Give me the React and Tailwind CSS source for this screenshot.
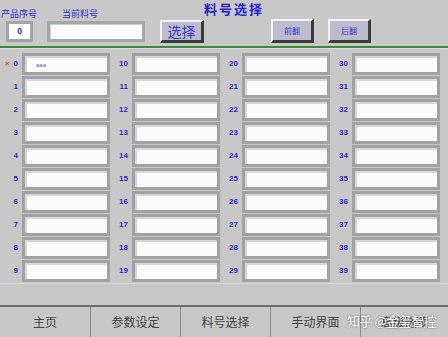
const CJK = "font-['Noto_Sans_CJK_SC',sans-serif]";

function Field({ children, className = "" }) {
  return (
    <div className={`flex h-[22px] w-[88px] shrink-0 bg-[#a2a2a2] p-[3px] ${className}`}>
      <div className="flex flex-1 items-center border-t-2 border-l-2 border-[#d6d6d6] bg-[#fbfbfb] pl-[9px]">
        {children}
      </div>
    </div>
  );
}

function BevelButton({ children, className = "" }) {
  return (
    <div
      className={`flex items-center justify-center border-t-2 border-l-2 border-[#f2f2f2] border-r-[3px] border-b-[3px] border-r-[#3c3c3c] border-b-[#3c3c3c] bg-[#bcbccc] ${className}`}
    >
      {children}
    </div>
  );
}

const tabs = ["主页", "参数设定", "料号选择", "手动界面", "高级选项"];

export default function App() {
  const cols = [0, 1, 2, 3];
  const rows = [0, 1, 2, 3, 4, 5, 6, 7, 8, 9];

  return (
    <div className={`relative h-[337px] w-[448px] overflow-hidden bg-[#c8c8c8] ${CJK}`}>
      {/* header */}
      <div className="h-[46px]">
        <div className="flex h-[19px] items-start">
          <span className="ml-[1px] mt-[9px] text-[9px] leading-[10px] text-[#3030c8]">产品序号</span>
          <span className="ml-[25px] mt-[9px] text-[9px] leading-[10px] text-[#3030c8]">当前料号</span>
          <span className="ml-[106px] mt-[1px] text-[13px] font-bold leading-[16px] tracking-[2px] text-[#2222cc]">
            料号选择
          </span>
        </div>
        <div className="flex h-[24px] items-center">
          <div className="ml-[6px] flex h-[21px] w-[27px] bg-[#a4a4a4] p-[3px]">
            <div className="flex flex-1 items-center justify-center bg-white text-[8px] font-bold text-[#2020c0]">0</div>
          </div>
          <div className="ml-[14px] flex h-[21px] w-[98px] bg-[#a2aaa2] p-[3px]">
            <div className="flex-1 border-t border-l border-[#d0d0d0] bg-[#fbfbfb]" />
          </div>
          <BevelButton className="ml-[15px] h-[23px] w-[44px] text-[14px] leading-none text-[#3a3ad0]">选择</BevelButton>
          <BevelButton className="ml-[67px] h-[24px] w-[43px] text-[8px] leading-none text-[#3a3ad0]">前翻</BevelButton>
          <BevelButton className="ml-[14px] h-[24px] w-[43px] text-[8px] leading-none text-[#3a3ad0]">后翻</BevelButton>
        </div>
      </div>
      <div className="h-[2px] bg-[#3a8a3a]" />
      <div className="h-[1px] bg-[#dcdcdc]" />

      {/* grid */}
      <div className="grid grid-cols-[110px_110px_110px_110px] pt-[4px]">
        {cols.map((c) => (
          <div key={c} className="flex flex-col gap-[1px]">
            {rows.map((r) => {
              const n = c * 10 + r;
              return (
                <div key={n} className="flex h-[22px] items-center">
                  <div className="relative flex w-[22px] shrink-0 items-center justify-end pr-[4px] font-['Liberation_Sans',sans-serif] text-[8px] font-bold text-[#2a2ad0]">
                    {n === 0 && (
                      <span className="absolute left-[5px] text-[8px] font-bold text-[#e04848]">×</span>
                    )}
                    {n}
                  </div>
                  <Field>
                    {n === 0 && <span className="font-['Liberation_Sans',sans-serif] text-[6px] text-[#6060c0]">aaa</span>}
                  </Field>
                </div>
              );
            })}
          </div>
        ))}
      </div>

      <div className="mt-[1px] h-[1px] bg-[#d8d8d8]" />
      <div className="h-[21px]" />
      <div className="h-[2px] bg-[#6c6c6c]" />

      {/* tab bar */}
      <div className="flex h-[30px]">
        {tabs.map((t, i) => (
          <div
            key={t}
            className={`flex h-full items-center justify-center text-[12px] text-[#444444] ${
              i === 0 ? "w-[91px]" : i === 4 ? "flex-1" : "w-[90px]"
            } ${i < 4 ? "border-r border-[#8a8a8a]" : ""}`}
          >
            {t}
          </div>
        ))}
      </div>

      {/* watermark */}
      <div className="absolute left-[347px] top-[311px] whitespace-nowrap text-[13px] leading-[20px] tracking-[-0.5px] text-white [text-shadow:0_0_2px_rgba(0,0,0,0.6)]">
        知乎 @金玺智控
      </div>
    </div>
  );
}
